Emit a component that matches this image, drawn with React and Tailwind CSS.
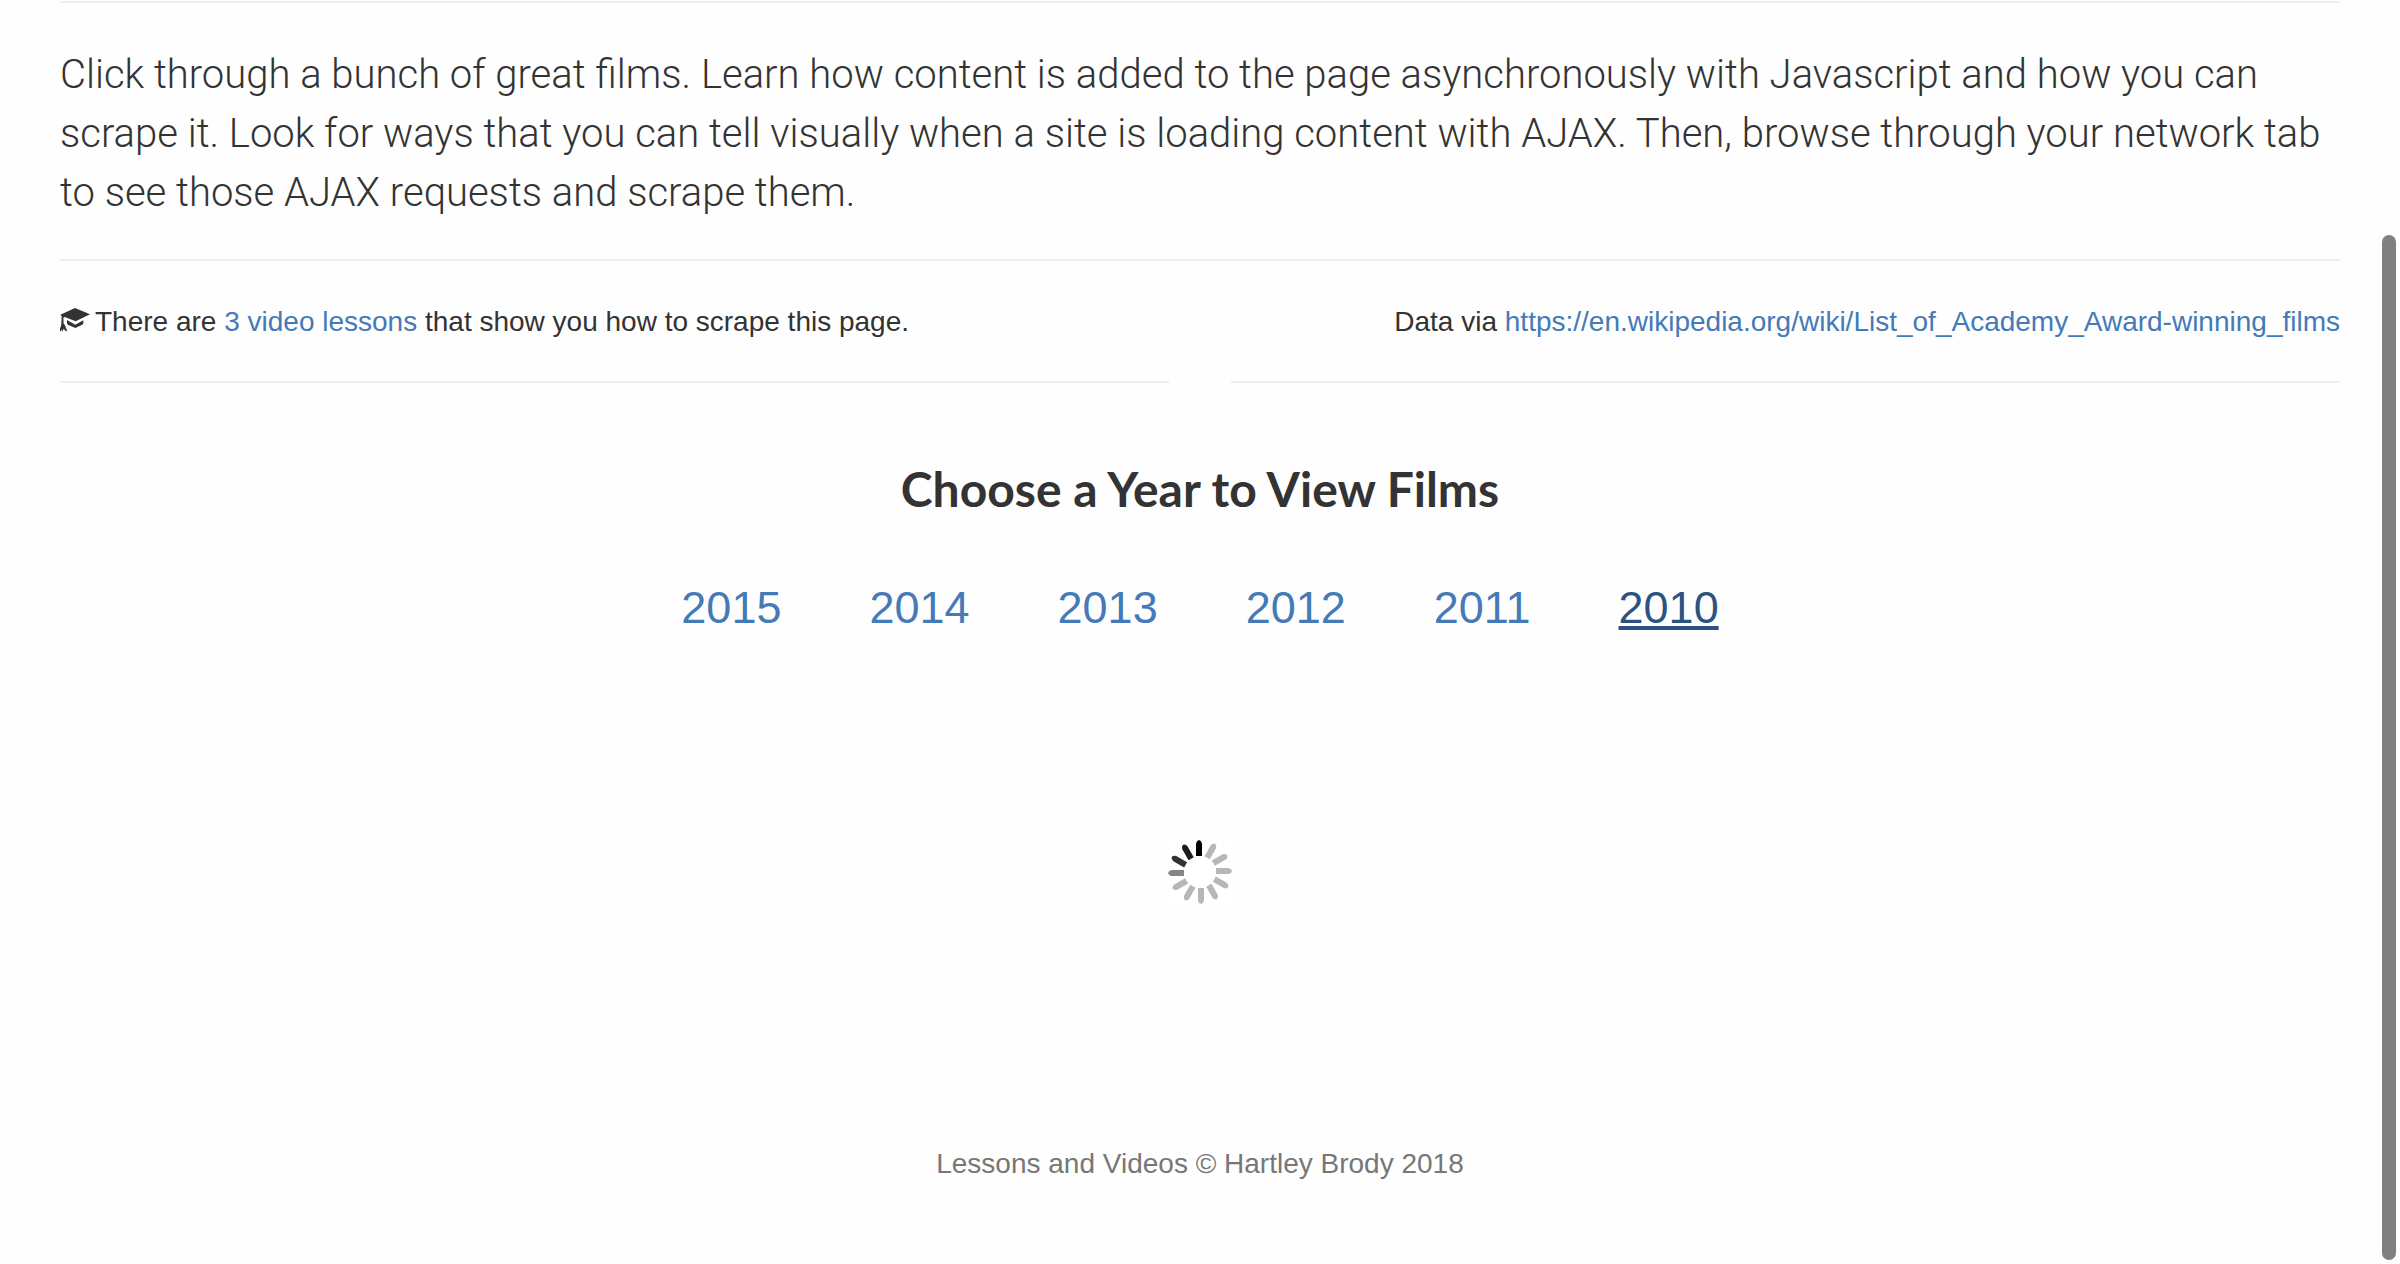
const years = [2015, 2014, 2013, 2012, 2011, 2010];

const spokes = [
  "#000000", "#b7b7b7", "#b7b7b7", "#b7b7b7", "#b7b7b7", "#b7b7b7",
  "#b7b7b7", "#b7b7b7", "#b7b7b7", "#868686", "#333333", "#1c1c1c",
];

function GraduationCap() {
  return (
    <svg viewBox="0 0 90 72" className="mr-[5px] inline-block h-6 w-[30px] align-[-1px]" fill="currentColor" aria-hidden="true">
      <path d="M45 0 L90 19 L47 40 L14 27 L10 29 L11 47 Q15 49 16 55 L22 70 L16 68 L11 62 L7 71 L5 65 L0 71 L0 61 Q4 54 4 47 L5 25 L1 20 Z" />
      <path d="M21 36 L46 50 L70 37 L70 46 Q69 49 65 51 L46 60 L25 51 Q21 49 21 46 Z" />
    </svg>
  );
}

function Spinner() {
  return (
    <svg viewBox="0 0 64 64" className="size-16" role="img" aria-label="Loading">
      <rect width="64" height="64" fill="#ffffff" />
      {spokes.map((color, i) => (
        <path
          key={i}
          d="M28 16 V3.5 Q28.5 0.5 31 0 Q33.5 0.5 34 3.5 V16 Z"
          fill={color}
          transform={`rotate(${i * 30} 32 32)`}
        />
      ))}
    </svg>
  );
}

export default function App() {
  return (
    <div className="relative min-h-screen bg-[#fefefe] font-['Liberation_Sans',sans-serif] text-[28px] leading-10 text-[#333333]">
      <main className="px-[60px] pt-px">
        <hr className="border-t-2 border-[#eeeeee]" />
        <p className="mt-[42px] font-['Roboto',sans-serif] text-[40px] leading-[59px] font-light">
          Click through a bunch of great films. Learn how content is added to the page asynchronously with Javascript and how you can <br />
          scrape it. Look for ways that you can tell visually when a site is loading content with AJAX. Then, browse through your network tab <br />
          to see those AJAX requests and scrape them.
        </p>
        <hr className="mt-[37px] border-t-2 border-[#eeeeee]" />
        <div className="grid grid-cols-2 gap-x-[62px]">
          <p className="border-b-2 border-[#eeeeee] pt-[41px] pb-[39px]">
            <GraduationCap />
            There are <a href="#lessons" className="text-[#447ab7]">3 video lessons</a> that show you how to scrape this page.
          </p>
          <p className="border-b-2 border-[#eeeeee] pt-[41px] pb-[39px] text-right">
            Data via{" "}
            <a href="https://en.wikipedia.org/wiki/List_of_Academy_Award-winning_films" className="text-[#447ab7]">
              https://en.wikipedia.org/wiki/List_of_Academy_Award-winning_films
            </a>
          </p>
        </div>
        <section className="flex flex-col items-center">
          <h3 className="mt-[79px] font-['Lato',sans-serif] text-[48px] leading-[54px] font-bold">Choose a Year to View Films</h3>
          <nav className="mt-[60px] flex justify-center gap-[88px] text-[45px] leading-[64px]">
            {years.map((year) => (
              <a
                key={year}
                href={`#${year}`}
                className={
                  year === 2010
                    ? "text-[#2c5280] underline decoration-4 underline-offset-[3px]"
                    : "text-[#447ab7]"
                }
              >
                {year}
              </a>
            ))}
          </nav>
          <div className="mt-50">
            <Spinner />
          </div>
        </section>
      </main>
      <footer className="pt-60 pb-20 text-center text-[#777777]">Lessons and Videos © Hartley Brody 2018</footer>
      <div className="absolute top-[235px] right-1 bottom-1 w-3.5 rounded-full bg-[#808080]" />
    </div>
  );
}
